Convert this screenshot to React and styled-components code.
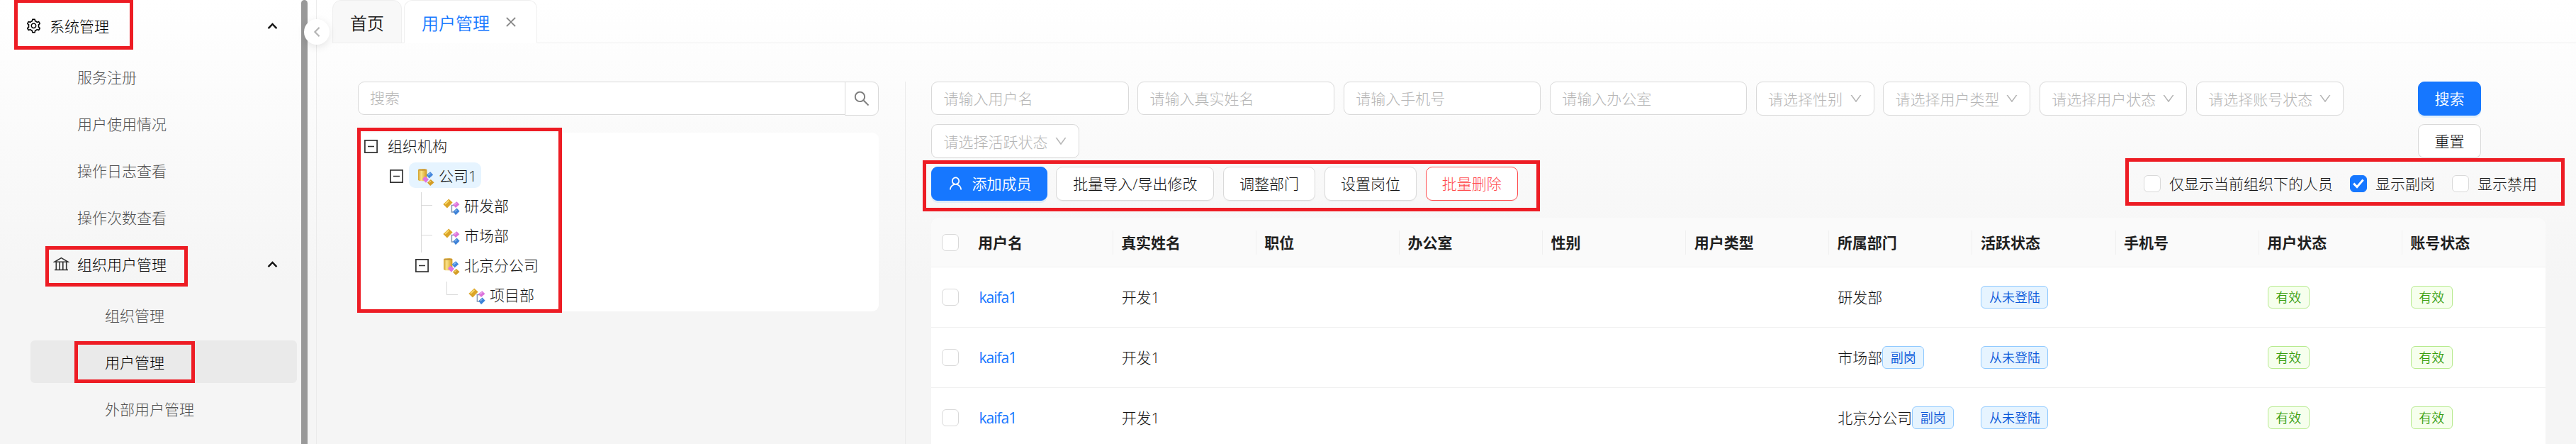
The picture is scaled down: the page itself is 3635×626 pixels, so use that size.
import React, { useState } from 'react';
import styled, { createGlobalStyle, css } from 'styled-components';
import {
  AiOutlineClose,
  AiOutlineDown,
  AiOutlineSearch,
  AiOutlineSetting,
  AiOutlineUser,
} from 'react-icons/ai';

const GlobalStyle = createGlobalStyle`
  * {
    box-sizing: border-box;
  }

  body {
    margin: 0;
    overflow: hidden;
    font-family: 'Open Sans', 'Noto Sans CJK SC', sans-serif;
    font-size: 21px;
    font-weight: 300;
    color: #141414;
  }

  svg {
    display: block;
    flex: none;
  }
`;

const Page = styled.div`
  display: flex;
  height: 626px;
  overflow: hidden;
  white-space: nowrap;
  background: linear-gradient(#ffffff, #f5f5f5 400px);
`;

/* red frame drawn over the parts the manual talks about */
const Mark = styled.div`
  position: absolute;
  top: ${props => props.$top}px;
  left: ${props => props.$left}px;
  width: ${props => props.$width}px;
  height: ${props => props.$height}px;
  border: 5px solid #ed1c24;
  pointer-events: none;
  z-index: 5;
`;

const Sidebar = styled.div`
  position: relative;
  display: flex;
  width: 447px;
  flex: none;
  border-right: 1px solid #ebebeb;
`;

const Menu = styled.div`
  display: flex;
  flex-direction: column;
  gap: 6px;
  width: 425px;
  padding: 6px 6px 0 4px;
`;

const MenuGroup = styled.div`
  position: relative;
  display: flex;
  align-items: center;
  gap: 11px;
  height: 60px;
  margin-bottom: 6px;
  padding: 1px 27px 0 ${props => props.$indent}px;
  color: #000;

  .arrow {
    margin: 0 0 0 auto;
  }

  .label {
    line-height: 30px;
  }
`;

const MenuItem = styled.div`
  position: relative;
  height: 60px;
  margin-left: 39px;
  padding: 1px 0 0 ${props => props.$indent}px;
  line-height: 60px;
  border-radius: 6px;
  color: ${props => (props.$active ? '#000' : '#525252')};
  background: ${props => (props.$active ? '#eaeaea' : 'transparent')};
`;

const Scrollbar = styled.div`
  width: 9px;
  height: 640px;
  border-radius: 5px;
  background: #999;
`;

const Collapse = styled.div`
  position: absolute;
  top: 27px;
  right: -19px;
  display: flex;
  align-items: center;
  justify-content: center;
  width: 36px;
  height: 36px;
  border-radius: 50%;
  background: #fff;
  box-shadow: 0 3px 12px rgba(0, 0, 0, 0.1);
  z-index: 4;
`;

const Main = styled.div`
  flex: 1;
  min-width: 0;
  display: flex;
  flex-direction: column;
`;

const TabBar = styled.div`
  display: flex;
  gap: 3px;
  height: 61px;
  margin-left: 22px;
  box-shadow: inset 0 -1px 0 #efefef;
`;

const Tab = styled.div`
  display: flex;
  align-items: center;
  width: ${props => props.$width}px;
  height: 61px;
  padding: 2px 0 0 24px;
  font-size: 24px;
  font-weight: 350;
  border: 1px solid #efefef;
  border-radius: 12px 12px 0 0;
  background: #f8f8f8;

  svg {
    margin: -2px 0 0 20px;
    color: #808080;
  }

  ${props =>
    props.$active &&
    css`
      color: #1677ff;
      background: #fff;
      border-bottom-color: #fff;
    `}
`;

const Content = styled.div`
  display: flex;
  flex: 1;
  padding: 54px 43px 0 58px;
`;

const OrgPanel = styled.div`
  width: 773px;
  padding-right: 37px;
  border-right: 1px solid #ebebeb;
  flex: none;
`;

const SearchBox = styled.div`
  display: flex;
  height: 48px;
  margin-bottom: 24px;
`;

const SearchInput = styled.div`
  flex: 1;
  height: 47px;
  padding-left: 16px;
  line-height: 45px;
  color: #b5b5b5;
  border: 1px solid #d9d9d9;
  border-radius: 9px 0 0 9px;
  background: #fff;
`;

const SearchIcon = styled.div`
  display: flex;
  align-items: center;
  justify-content: center;
  width: 48px;
  height: 48px;
  margin-left: -1px;
  color: #7d7d7d;
  border: 1px solid #d9d9d9;
  border-radius: 0 9px 9px 0;
  background: #fff;
`;

const Tree = styled.div`
  position: relative;
  display: flex;
  flex-direction: column;
  gap: 6px;
  padding-bottom: 6px;
  border-radius: 9px;
  background: #fff;
`;

const TreeRow = styled.div`
  display: flex;
  height: 36px;
  padding-left: ${props => props.$level * 36}px;
`;

const Switcher = styled.div`
  width: 36px;
  padding: 10px 0 0 9px;
`;

/* connector in front of a node that has no children */
const LeafLine = styled.div`
  width: 36px;
  height: ${props => (props.$last ? 18 : 42)}px;
  padding-left: 17px;

  &::before {
    content: '';
    display: block;
    width: 15px;
    height: 18px;
    border-left: 1px solid #d9d9d9;
    border-bottom: 1px solid #d9d9d9;
  }

  &::after {
    content: '';
    display: block;
    width: 15px;
    height: ${props => (props.$last ? 0 : 24)}px;
    border-left: 1px solid #d9d9d9;
  }
`;

const TreeNode = styled.div`
  display: flex;
  align-items: center;
  padding: 0 6px;
  border-radius: 9px;
  background: ${props => (props.$active ? '#e6f4ff' : 'transparent')};

  svg {
    margin: 5px 6px 0 6px;
  }

  .label {
    line-height: 36px;
    padding-top: 1px;
  }
`;

const UserPanel = styled.div`
  position: relative;
  flex: 1;
  min-width: 0;
  padding-left: 36px;
`;

const FilterBar = styled.div`
  display: flex;
  justify-content: space-between;
  height: 120px;
  padding-right: 91px;
`;

const Filters = styled.div`
  display: flex;
  flex-wrap: wrap;
  align-content: flex-start;
  gap: 12px 12.4px;
  width: 2040px;
`;

const Field = styled.div`
  display: flex;
  align-items: center;
  justify-content: space-between;
  width: ${props => props.$width}px;
  height: ${props => (props.$select ? 48 : 47)}px;
  padding: 0 15px 1px 16.5px;
  color: #b5b5b5;
  border: 1px solid #d9d9d9;
  border-radius: 9px;
  background: #fff;

  svg {
    margin-top: 1px;
  }
`;

const FilterButtons = styled.div`
  display: flex;
  flex-direction: column;
  gap: 12px;
`;

const Button = styled.button`
  display: flex;
  align-items: center;
  justify-content: center;
  gap: 12px;
  width: ${props => props.$width}px;
  height: 48px;
  padding: 0 0 1px;
  font: inherit;
  line-height: 30px;
  color: #141414;
  border: 1px solid #d9d9d9;
  border-radius: 9px;
  background: #fff;
  box-shadow: 0 2px 0 rgba(0, 0, 0, 0.02);

  ${props =>
    props.$primary &&
    css`
      color: #fff;
      font-weight: 350;
      border-color: #1677ff;
      background: #1677ff;
      box-shadow: 0 3px 0 rgba(5, 145, 255, 0.1);
    `}

  ${props =>
    props.$danger &&
    css`
      color: #ff4d4f;
      border-color: #ff4d4f;
    `}
`;

const Toolbar = styled.div`
  display: flex;
  align-items: center;
  justify-content: space-between;
  height: 48px;
  margin-bottom: 24px;
  padding-right: 12px;
`;

const Actions = styled.div`
  display: flex;
  gap: 12.4px;
`;

const Options = styled.div`
  display: flex;
  gap: 24px;
`;

const Option = styled.div`
  display: flex;
  align-items: center;
  gap: 12px;
  line-height: 30px;
`;

const Box = styled.span`
  display: flex;
  align-items: center;
  justify-content: center;
  width: 24px;
  height: 24px;
  flex: none;
  border: 1px solid ${props => (props.$checked ? '#1677ff' : '#d9d9d9')};
  border-radius: 6px;
  background: ${props => (props.$checked ? '#1677ff' : '#fff')};
`;

const Table = styled.div`
  border-radius: 12px 12px 0 0;
  background: #fff;
`;

const Row = styled.div`
  display: grid;
  grid-template-columns: 54.5px repeat(11, 1fr);
  align-items: center;
  height: 85px;
  border-bottom: 1px solid #f0f0f0;
`;

const HeadRow = styled(Row)`
  height: 70px;
  font-weight: 700;
  color: #1f1f1f;
  border-radius: 12px 12px 0 0;
  background: #fafafa;
`;

const Cell = styled.div`
  display: flex;
  align-items: center;
  padding-left: 12px;
  line-height: 30px;
`;

const HeadCell = styled(Cell)`
  height: 34px;
  padding: 1px 0 0 11.5px;
  border-right: 1px solid #f0f0f0;

  &:last-child {
    border-right: none;
  }
`;

const CheckCell = styled.div`
  display: flex;
  justify-content: center;
`;

const UserLink = styled.a`
  margin-left: 1px;
  color: #1677ff;
  font-weight: 400;
  letter-spacing: -1px;
`;

const tagColors = {
  blue: css`
    color: #0958d9;
    border-color: #91caff;
    background: #e6f4ff;
  `,
  green: css`
    color: #389e0d;
    border-color: #b7eb8f;
    background: #f6ffed;
  `,
};

const Tag = styled.span`
  height: 32px;
  padding: 0 10.5px;
  font-size: 18px;
  font-weight: 350;
  line-height: 30px;
  border: 1px solid;
  border-radius: 6px;
  ${props => tagColors[props.$color]}
`;

const ArrowUp = () => (
  <svg className="arrow" width="15" height="11" viewBox="0 0 15 11">
    <path d="M1.6 9.2L7.5 3L13.4 9.2" fill="none" stroke="#111" strokeWidth="2.4" />
  </svg>
);

const BankIcon = () => (
  <svg width="23" height="21" viewBox="0 0 23 21">
    <path
      d="M2 7.2L11.5 1.6L21 7.2zM4.3 7.5V18M9.2 7.5V18M13.8 7.5V18M18.7 7.5V18M2 18.5H21"
      fill="none"
      stroke="#333"
      strokeWidth="1.6"
    />
  </svg>
);

const MinusSquare = () => (
  <svg width="19" height="19" viewBox="0 0 19 19">
    <path d="M0.9 0.9H18.1V18.1H0.9zM5 9.5H14" fill="none" stroke="#333" strokeWidth="1.7" />
  </svg>
);

const CompanyIcon = () => (
  <svg width="24" height="24" viewBox="0 0 24 24">
    <defs>
      <linearGradient id="drum">
        <stop offset="0" stopColor="#d3a12f" />
        <stop offset="0.35" stopColor="#fbe48a" />
        <stop offset="1" stopColor="#d3981a" />
      </linearGradient>
    </defs>
    <path d="M1 1.6C1 -0.4 13.4 -0.4 13.4 1.6V15.4c0 2.6-12.4 2.6-12.4 0z" fill="url(#drum)" />
    <ellipse cx="7.2" cy="1.6" rx="5.6" ry="1.2" fill="#c4943a" />
    <path d="M12.6 8.8L18.2 4.2L22.2 8.4L16.6 13.6z" fill="#4587dc" />
    <path d="M7 14.4L10.6 10.4L16 14.8L12 19.8z" fill="#e174df" />
    <path d="M14 19.6L18.8 15L23.6 19.2L18.2 24z" fill="#d39c25" />
    <path d="M15 9L18.2 6.4" stroke="#8fc1f5" strokeWidth="1.4" />
    <path d="M16.4 19.4L19 17.2" stroke="#f3d26c" strokeWidth="1.4" />
  </svg>
);

const DeptIcon = () => (
  <svg width="24" height="24" viewBox="0 0 24 24">
    <path d="M11.5 9.5H19M12.4 9.5V19H18" fill="none" stroke="#8799b5" strokeWidth="1.5" />
    <path d="M0.4 8L8.2 0.4L13.6 5.4L6 13.4z" fill="#dba528" />
    <path d="M3 7.8L8.4 2.8" stroke="#f8d868" strokeWidth="2" />
    <path d="M14 8.4L19.4 4.2L23.4 8.2L18 13z" fill="#dc73dc" />
    <path d="M14.4 18.2L19.6 13.6L23.6 17.8L18 23.2z" fill="#3d82d8" />
    <path d="M16.4 8.6L19.4 6.2M16.8 18.2L19.6 15.8" stroke="#fff" strokeOpacity="0.4" strokeWidth="1.5" />
  </svg>
);

const Checkbox = ({ checked }) => (
  <Box $checked={checked}>
    {checked && (
      <svg width="16" height="14" viewBox="0 0 16 14">
        <path d="M1.2 6.6L6 11.6L14.6 1.6" fill="none" stroke="#fff" strokeWidth="3" />
      </svg>
    )}
  </Box>
);

const systemMenu = ['服务注册', '用户使用情况', '操作日志查看', '操作次数查看'];
const orgMenu = ['组织管理', '用户管理', '外部用户管理'];

const treeData = [
  { title: '组织机构', level: 0 },
  { title: '公司1', level: 1, type: 'company', active: true },
  { title: '研发部', level: 2, type: 'dept', leaf: true },
  { title: '市场部', level: 2, type: 'dept', leaf: true },
  { title: '北京分公司', level: 2, type: 'company' },
  { title: '项目部', level: 3, type: 'dept', leaf: true, last: true },
];

const filters = [
  { label: '请输入用户名', width: 278.5 },
  { label: '请输入真实姓名', width: 278.5 },
  { label: '请输入手机号', width: 278.5 },
  { label: '请输入办公室', width: 278.5 },
  { label: '请选择性别', width: 167, select: true },
  { label: '请选择用户类型', width: 208.5, select: true },
  { label: '请选择用户状态', width: 208.5, select: true },
  { label: '请选择账号状态', width: 208.5, select: true },
  { label: '请选择活跃状态', width: 208.5, select: true },
];

const columns = [
  '用户名', '真实姓名', '职位', '办公室', '性别', '用户类型',
  '所属部门', '活跃状态', '手机号', '用户状态', '账号状态',
];

const users = [
  { id: 1, username: 'kaifa1', name: '开发1', dept: '研发部', part: false },
  { id: 2, username: 'kaifa1', name: '开发1', dept: '市场部', part: true },
  { id: 3, username: 'kaifa1', name: '开发1', dept: '北京分公司', part: true },
];

const App = () => {
  const [current, setCurrent] = useState('用户管理');

  return (
    <>
      <GlobalStyle />
      <Page>
        <Sidebar>
          <Menu>
            <MenuGroup $indent={32}>
              <AiOutlineSetting size={23} />
              <span className="label">系统管理</span>
              <ArrowUp />
              <Mark $top={-7} $left={16} $width={168} $height={71} />
            </MenuGroup>
            {systemMenu.map(item => (
              <MenuItem key={item} $indent={66}>{item}</MenuItem>
            ))}
            <MenuGroup $indent={71}>
              <BankIcon />
              <span className="label">组织用户管理</span>
              <ArrowUp />
              <Mark $top={5} $left={60} $width={201} $height={57} />
            </MenuGroup>
            {orgMenu.map(item => (
              <MenuItem
                key={item}
                $indent={105}
                $active={item === current}
                onClick={() => setCurrent(item)}
              >
                {item}
                {item === '用户管理' && <Mark $top={1} $left={62} $width={170} $height={59} />}
              </MenuItem>
            ))}
          </Menu>
          <Scrollbar />
          <Collapse>
            <svg width="10" height="16" viewBox="0 0 10 16">
              <path d="M8.6 1.8L2.4 8L8.6 14.2" fill="none" stroke="#b5b5b5" strokeWidth="2.2" />
            </svg>
          </Collapse>
        </Sidebar>

        <Main>
          <TabBar>
            <Tab $width={98}>首页</Tab>
            <Tab $width={188} $active>
              用户管理
              <AiOutlineClose size={20} />
            </Tab>
          </TabBar>

          <Content>
            <OrgPanel>
              <SearchBox>
                <SearchInput>搜索</SearchInput>
                <SearchIcon>
                  <AiOutlineSearch size={26} />
                </SearchIcon>
              </SearchBox>
              <Tree>
                {treeData.map(node => (
                  <TreeRow key={node.title} $level={node.level}>
                    {node.leaf ? (
                      <LeafLine $last={node.last} />
                    ) : (
                      <Switcher>
                        <MinusSquare />
                      </Switcher>
                    )}
                    <TreeNode $active={node.active}>
                      {node.type === 'company' && <CompanyIcon />}
                      {node.type === 'dept' && <DeptIcon />}
                      <span className="label">{node.title}</span>
                    </TreeNode>
                  </TreeRow>
                ))}
                <Mark $top={-7} $left={-1} $width={289} $height={261} />
              </Tree>
            </OrgPanel>

            <UserPanel>
              <FilterBar>
                <Filters>
                  {filters.map(filter => (
                    <Field key={filter.label} $width={filter.width} $select={filter.select}>
                      {filter.label}
                      {filter.select && <AiOutlineDown size={20} />}
                    </Field>
                  ))}
                </Filters>
                <FilterButtons>
                  <Button $width={89} $primary>搜索</Button>
                  <Button $width={89}>重置</Button>
                </FilterButtons>
              </FilterBar>

              <Toolbar>
                <Actions>
                  <Button $width={164} $primary>
                    <AiOutlineUser size={23} />
                    添加成员
                  </Button>
                  <Button $width={223}>批量导入/导出修改</Button>
                  <Button $width={130.5}>调整部门</Button>
                  <Button $width={130.5}>设置岗位</Button>
                  <Button $width={130.5} $danger>批量删除</Button>
                </Actions>
                <Options>
                  <Option><Checkbox />仅显示当前组织下的人员</Option>
                  <Option><Checkbox checked />显示副岗</Option>
                  <Option><Checkbox />显示禁用</Option>
                </Options>
              </Toolbar>
              <Mark $top={111} $left={24} $width={871} $height={72} />
              <Mark $top={108} $left={1721} $width={620} $height={67} />

              <Table>
                <HeadRow>
                  <CheckCell><Checkbox /></CheckCell>
                  {columns.map(column => (
                    <HeadCell key={column}>{column}</HeadCell>
                  ))}
                </HeadRow>
                {users.map(user => (
                  <Row key={user.id}>
                    <CheckCell><Checkbox /></CheckCell>
                    <Cell><UserLink>{user.username}</UserLink></Cell>
                    <Cell>{user.name}</Cell>
                    <Cell />
                    <Cell />
                    <Cell />
                    <Cell />
                    <Cell>
                      {user.dept}
                      {user.part && <Tag $color="blue">副岗</Tag>}
                    </Cell>
                    <Cell><Tag $color="blue">从未登陆</Tag></Cell>
                    <Cell />
                    <Cell><Tag $color="green">有效</Tag></Cell>
                    <Cell><Tag $color="green">有效</Tag></Cell>
                  </Row>
                ))}
              </Table>
            </UserPanel>
          </Content>
        </Main>
      </Page>
    </>
  );
};

export default App;
